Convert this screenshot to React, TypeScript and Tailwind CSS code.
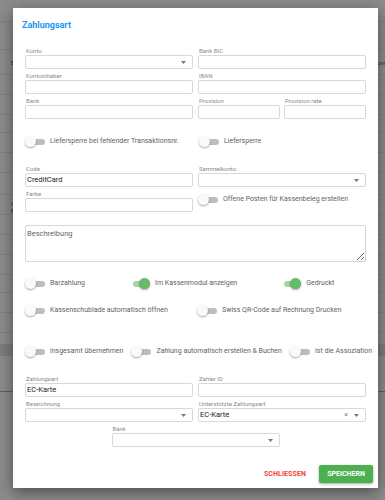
const bgLines = [22, 50, 75, 95, 115, 133, 153, 173, 195, 215, 235, 255, 275, 293, 313, 333, 345];

function Toggle({ on }: { on?: boolean }) {
  return (
    <span className="relative inline-block w-[20px] h-[11px] shrink-0">
      <span className={`absolute left-[3px] right-0 top-[2.5px] h-[6px] rounded-full ${on ? 'bg-[#a5d6a7]' : 'bg-[#bdbdbd]'}`} />
      <span
        className={`absolute top-0 h-[11px] w-[11px] rounded-full shadow-[0_1px_2px_rgba(0,0,0,0.35)] ${
          on ? 'right-0 bg-[#66bb6a]' : 'left-0 bg-[#fafafa]'
        }`}
      />
    </span>
  );
}

function Switch({ label, on, className = '' }: { label: string; on?: boolean; className?: string }) {
  return (
    <div className={`flex items-center gap-[5px] h-[11px] ${className}`}>
      <Toggle on={on} />
      <span className="text-[7px] leading-none text-[#5f5f5f] whitespace-nowrap">{label}</span>
    </div>
  );
}

function Caret() {
  return (
    <svg width="5" height="3" viewBox="0 0 5 3" className="shrink-0">
      <path d="M0 0h5L2.5 3z" fill="#777" />
    </svg>
  );
}

interface FieldProps {
  label: string;
  value?: string;
  select?: boolean;
  clear?: boolean;
  className?: string;
}

function Field({ label, value, select, clear, className = '' }: FieldProps) {
  return (
    <div className={className}>
      <div className="text-[6px] leading-[7px] h-[7px] mb-[1px] text-[#8a8a8a] pl-[1px]">{label}</div>
      <div className="h-[14px] flex items-center border border-[#d8d8d8] rounded-[2px] bg-white pl-[1px] pr-[6px]">
        <span className="flex-1 text-[7.5px] text-[#222] leading-none">{value}</span>
        {clear && <span className="text-[7px] text-[#777] leading-none mr-[6px]">×</span>}
        {select && <Caret />}
      </div>
    </div>
  );
}

export default function App() {
  let prev = 0;
  return (
    <div className="relative w-[385px] h-[500px] overflow-hidden bg-[#8b8b8b] font-['Roboto',sans-serif] antialiased">
      {/* Hintergrundseite unter dem Overlay */}
      <div className="flex flex-col">
        {bgLines.map((y, i) => {
          const h = y - prev;
          prev = y;
          return (
            <div
              key={y}
              style={{ height: h }}
              className="border-b border-[#7f7f7f] flex items-center justify-between text-[6px] text-[#333]"
            >
              {i === 2 && (
                <>
                  <span className="pl-[11px]">E</span>
                  <span>ovi</span>
                </>
              )}
              {i === 9 && (
                <span className="pl-[11px] leading-[7px] pt-[4px]">
                  C<br />E
                </span>
              )}
            </div>
          );
        })}
        <div className="h-[11px] bg-[#7c7c7c]" />
        <div className="h-[36px] border-b border-[#5e5e5e]" />
      </div>

      {/* Dialog */}
      <div className="absolute left-[13px] top-[8px] w-[365px] h-[480px] bg-white shadow-[0_4px_14px_rgba(0,0,0,0.45)] pt-[11px] opacity-[0.999]">
        <div className="pl-[9px] text-[9px] leading-[12px] font-bold text-[#2196f3]">Zahlungsart</div>

        <div className="px-[12px] mt-[16px]">
          <div className="grid grid-cols-2 gap-x-[5px] gap-y-[3px]">
            <Field label="Konto" select />
            <Field label="Bank BIC" />
            <Field label="Kontoinhaber" />
            <Field label="IBAN" />
            <Field label="Bank" />
            <div className="grid grid-cols-2 gap-x-[4px]">
              <Field label="Provision" />
              <Field label="Provision rate" />
            </div>
          </div>

          <div className="grid grid-cols-2 gap-x-[5px] mt-[17px]">
            <Switch label="Liefersperre bei fehlender Transaktionsnr." />
            <Switch label="Liefersperre" className="pl-[1px]" />
          </div>

          <div className="grid grid-cols-2 gap-x-[5px] gap-y-[3px] mt-[18px]">
            <Field label="Code" value="CreditCard" />
            <Field label="Sammelkonto" select />
            <Field label="Farbe" />
            <div className="pt-[4px]">
              <Switch label="Offene Posten für Kassenbeleg erstellen" />
            </div>
          </div>

          <textarea
            placeholder="Beschreibung"
            className="block w-full h-[37px] mt-[13px] border border-[#d8d8d8] rounded-[2px] px-[1px] py-[3px] text-[7.5px] leading-[9px] placeholder:text-[#666] outline-none resize-y"
          />

          <div className="flex mt-[16px]">
            <Switch label="Barzahlung" className="mr-[45px]" />
            <Switch label="Im Kassenmodul anzeigen" on className="mr-[44px]" />
            <Switch label="Gedruckt" on />
          </div>

          <div className="grid grid-cols-2 gap-x-[5px] mt-[16px]">
            <Switch label="Kassenschublade automatisch öffnen" />
            <Switch label="Swiss QR-Code auf Rechnung Drucken" className="-ml-[1px]" />
          </div>

          <div className="flex mt-[30px]">
            <Switch label="insgesamt übernehmen" className="mr-[8px]" />
            <Switch label="Zahlung automatisch erstellen & Buchen" className="mr-[8px]" />
            <Switch label="Ist die Assoziation" />
          </div>

          <div className="grid grid-cols-2 gap-x-[5px] gap-y-[3px] mt-[18px]">
            <Field label="Zahlungsart" value="EC-Karte" />
            <Field label="Zahler ID" />
            <Field label="Bezeichnung" select />
            <Field label="Unterstützte Zahlungsart" value="EC-Karte" select clear />
          </div>
          <div className="flex justify-center mt-[3px]">
            <Field label="Bank" select className="w-[168px]" />
          </div>
        </div>

        <div className="flex items-center justify-end gap-[13px] pr-[5px] mt-[18px]">
          <span className="text-[7px] font-bold text-[#f44336] tracking-[0.1px]">SCHLIESSEN</span>
          <button className="w-[54px] h-[18px] rounded-[2px] bg-[#4caf50] text-white text-[7px] font-bold shadow-[0_1px_3px_rgba(0,0,0,0.35)]">
            SPEICHERN
          </button>
        </div>
      </div>
    </div>
  );
}
